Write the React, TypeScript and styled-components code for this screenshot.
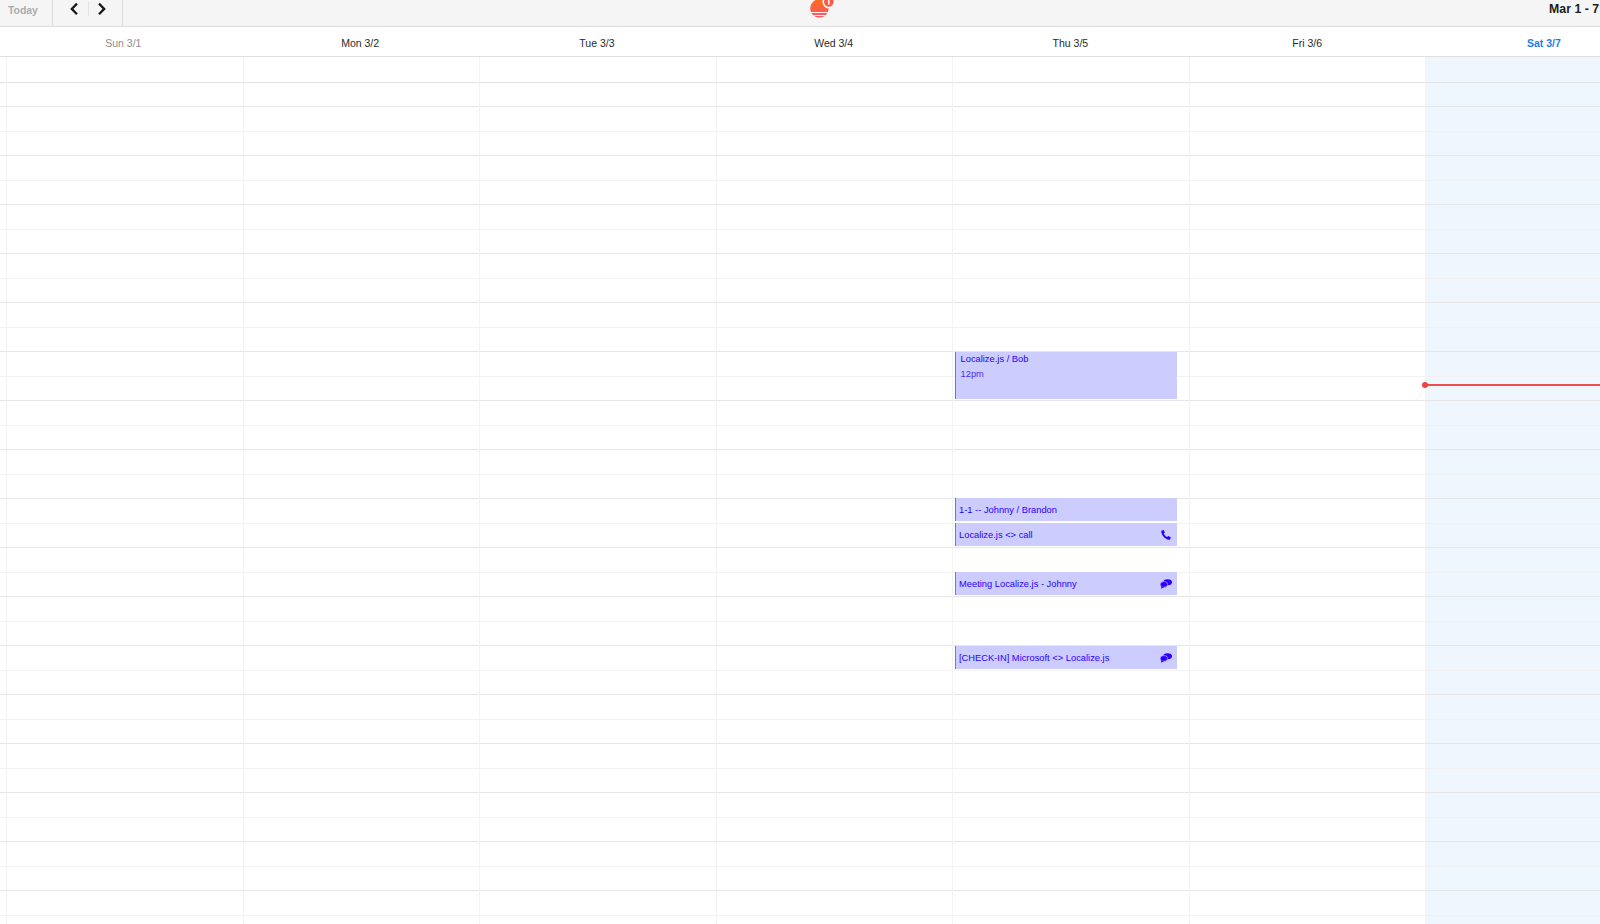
import React from "react";
import styled, { createGlobalStyle } from "styled-components";

const Global = createGlobalStyle`
  html, body { margin: 0; padding: 0; background: #fff; overflow: hidden; }
  body { font-family: "Liberation Sans", Arial, sans-serif; color: #1f1f1f; }
`;

const Page = styled.div`
  width: 1600px;
  height: 924px;
  overflow: hidden;
  display: flex;
  flex-direction: column;
  -webkit-font-smoothing: antialiased;
`;

const Toolbar = styled.div`
  flex: none;
  height: 26px;
  background: #f5f5f5;
  border-bottom: 1px solid #dcdcdc;
  box-sizing: content-box;
  display: grid;
  grid-template-columns: 1fr auto 1fr;
`;

const ToolLeft = styled.div`
  display: flex;
  align-items: stretch;
`;

const TodayButton = styled.div`
  width: 53px;
  box-sizing: border-box;
  padding: 4px 0 0 8px;
  font-size: 10.4px;
  line-height: 13px;
  font-weight: 700;
  color: #ababab;
  border-right: 1px solid #dcdcdc;
`;

const NavGroup = styled.div`
  width: 70px;
  box-sizing: border-box;
  display: flex;
  align-items: flex-start;
  padding: 0 0 0 16px;
  border-right: 1px solid #dcdcdc;
`;

const NavDivider = styled.span`
  width: 1px;
  height: 15px;
  background: #e4e4e4;
  margin: 1px 8px 0 8.5px;
`;

const LogoWrap = styled.div`
  width: 34px;
  height: 26px;
  margin-left: 53px;
`;

const Title = styled.div`
  text-align: right;
  font-size: 12.3px;
  line-height: 19px;
  font-weight: 700;
  color: #1c1c1c;
  white-space: nowrap;
  padding: 0 1px 0 0;
`;

const HeadRow = styled.div`
  flex: none;
  height: 29px;
  padding-left: 5px;
  display: grid;
  grid-template-columns: repeat(7, 236.75px);
  border-bottom: 1px solid #dfdfdf;
`;

const DayLabel = styled.div<{ $tone: "past" | "normal" | "today" }>`
  text-align: center;
  font-size: 10.5px;
  line-height: 32px;
  font-weight: ${(p) => (p.$tone === "today" ? 700 : 400)};
  color: ${(p) => (p.$tone === "past" ? "#8e8e8e" : p.$tone === "today" ? "#1a7fe6" : "#2a2a2a")};
`;

const Body = styled.div`
  flex: 1;
  position: relative;
  display: grid;
  grid-template-columns: 6px repeat(7, 236.5px);
  overflow: hidden;
`;

const Gutter = styled.div`
  position: relative;
`;

const Column = styled.div<{ $today?: boolean }>`
  position: relative;
  border-left: 1px solid #f3f3f5;
  background: ${(p) => (p.$today ? "#f0f6fd" : "transparent")};
`;

const AllDayCell = styled.div`
  height: 24.5px;
  border-bottom: 1px solid #e2e2e2;
  box-sizing: content-box;
`;

const Slot = styled.div<{ $hour: boolean }>`
  height: 23.5px;
  border-bottom: 1px solid ${(p) => (p.$hour ? "#e6e6e6" : "#f2f2f2")};
`;

const Event = styled.div<{ $top: number; $height: number }>`
  position: absolute;
  top: ${(p) => p.$top}px;
  left: 2px;
  width: 222px;
  height: ${(p) => p.$height}px;
  box-sizing: border-box;
  background: #ccccff;
  border-left: 1px solid #7a6cf2;
  color: #2b00ff;
  font-size: 9.33px;
  z-index: 2;
`;

const ShortEvent = styled(Event)`
  display: flex;
  align-items: center;
  justify-content: space-between;
  padding: 1.5px 5px 0 3px;
  line-height: 12px;
`;

const TallEvent = styled(Event)`
  padding: 1px 4.5px;
`;

const EventTitle = styled.div`
  line-height: 12px;
`;

const EventTime = styled.div`
  line-height: 12px;
  margin-top: 3px;
  color: #4a30f0;
`;

const NowLine = styled.div`
  position: absolute;
  left: 0;
  right: 0;
  top: 327px;
  height: 2px;
  background: #ef4f4c;
  z-index: 3;

  &::before {
    content: "";
    position: absolute;
    left: -4px;
    top: -2px;
    width: 6px;
    height: 6px;
    border-radius: 50%;
    background: #ef4444;
  }
`;

const PhoneSvg = styled.svg`
  margin-right: 1px;
`;

const Chevron = ({ dir }: { dir: "left" | "right" }) => (
  <svg width="10" height="18" viewBox="0 0 10 18" fill="none">
    <path
      d={dir === "left" ? "M8 3.6 L2.8 8.9 L8 14.2" : "M2 3.6 L7.2 8.9 L2 14.2"}
      stroke="#1a1a1a"
      strokeWidth="2.3"
    />
  </svg>
);

const Logo = () => (
  <svg width="34" height="26" viewBox="0 0 34 26">
    <defs>
      <linearGradient id="sun" x1="0" y1="0" x2="0" y2="1">
        <stop offset="0" stopColor="#ff6a1a" />
        <stop offset="1" stopColor="#ff5566" />
      </linearGradient>
      <clipPath id="sunClip">
        <circle cx="9.4" cy="8.4" r="9.2" />
      </clipPath>
    </defs>
    <g clipPath="url(#sunClip)">
      <rect x="0" y="-1" width="19" height="19" fill="url(#sun)" />
      <rect x="0" y="12" width="19" height="1" fill="#fff" opacity="0.9" />
      <rect x="0" y="15" width="19" height="1" fill="#fff" opacity="0.9" />
    </g>
    <circle cx="18.8" cy="2" r="5.6" fill="#ff5a45" stroke="#fff" strokeWidth="1.6" />
    <rect x="18.1" y="0" width="1.4" height="4.6" fill="#fff" />
  </svg>
);

const PhoneIcon = () => (
  <PhoneSvg width="10" height="10" viewBox="0 0 10 10">
    <path
      d="M0.9 0.6 L2.7 0.1 L3.9 2.5 L2.7 3.5 C3.3 5 4.6 6.4 6.2 7 L7.3 5.9 L9.8 7.2 L9.3 9 C9 9.7 8.4 10 7.7 9.8 C4.2 9.1 1 6 0.3 2 C0.2 1.4 0.4 0.9 0.9 0.6 Z"
      fill="#2b00ff"
    />
  </PhoneSvg>
);

const ChatIcon = () => (
  <svg width="12" height="10" viewBox="0 0 12 10">
    <ellipse cx="7.6" cy="3.2" rx="4.4" ry="3" fill="#2b00ff" />
    <ellipse cx="3.9" cy="5.4" rx="3.7" ry="2.9" fill="#2b00ff" stroke="#ccccff" strokeWidth="0.6" />
    <path d="M1.5 7 L1 9.8 L4.4 8 Z" fill="#2b00ff" />
  </svg>
);

const days: { label: string; tone: "past" | "normal" | "today" }[] = [
  { label: "Sun 3/1", tone: "past" },
  { label: "Mon 3/2", tone: "normal" },
  { label: "Tue 3/3", tone: "normal" },
  { label: "Wed 3/4", tone: "normal" },
  { label: "Thu 3/5", tone: "normal" },
  { label: "Fri 3/6", tone: "normal" },
  { label: "Sat 3/7", tone: "today" },
];

const slots = Array.from({ length: 34 }, (_, i) => i);

const SlotLines = () => (
  <>
    <AllDayCell />
    {slots.map((i) => (
      <Slot key={i} $hour={i % 2 === 0} />
    ))}
  </>
);

export default function App() {
  return (
    <Page>
      <Global />
      <Toolbar>
        <ToolLeft>
          <TodayButton>Today</TodayButton>
          <NavGroup>
            <Chevron dir="left" />
            <NavDivider />
            <Chevron dir="right" />
          </NavGroup>
        </ToolLeft>
        <LogoWrap>
          <Logo />
        </LogoWrap>
        <Title>Mar 1 - 7</Title>
      </Toolbar>
      <HeadRow>
        {days.map((d) => (
          <DayLabel key={d.label} $tone={d.tone}>
            {d.label}
          </DayLabel>
        ))}
      </HeadRow>
      <Body>
        <Gutter>
          <SlotLines />
        </Gutter>
        {days.map((d) => (
          <Column key={d.label} $today={d.tone === "today"}>
            <SlotLines />
            {d.label === "Thu 3/5" && (
              <>
                <TallEvent $top={295} $height={47}>
                  <EventTitle>Localize.js / Bob</EventTitle>
                  <EventTime>12pm</EventTime>
                </TallEvent>
                <ShortEvent $top={441} $height={23}>
                  <span>1-1 -- Johnny / Brandon</span>
                </ShortEvent>
                <ShortEvent $top={466} $height={23}>
                  <span>Localize.js &lt;&gt; call</span>
                  <PhoneIcon />
                </ShortEvent>
                <ShortEvent $top={515} $height={23}>
                  <span>Meeting Localize.js - Johnny</span>
                  <ChatIcon />
                </ShortEvent>
                <ShortEvent $top={589} $height={23}>
                  <span>[CHECK-IN] Microsoft &lt;&gt; Localize.js</span>
                  <ChatIcon />
                </ShortEvent>
              </>
            )}
            {d.tone === "today" && <NowLine />}
          </Column>
        ))}
      </Body>
    </Page>
  );
}
